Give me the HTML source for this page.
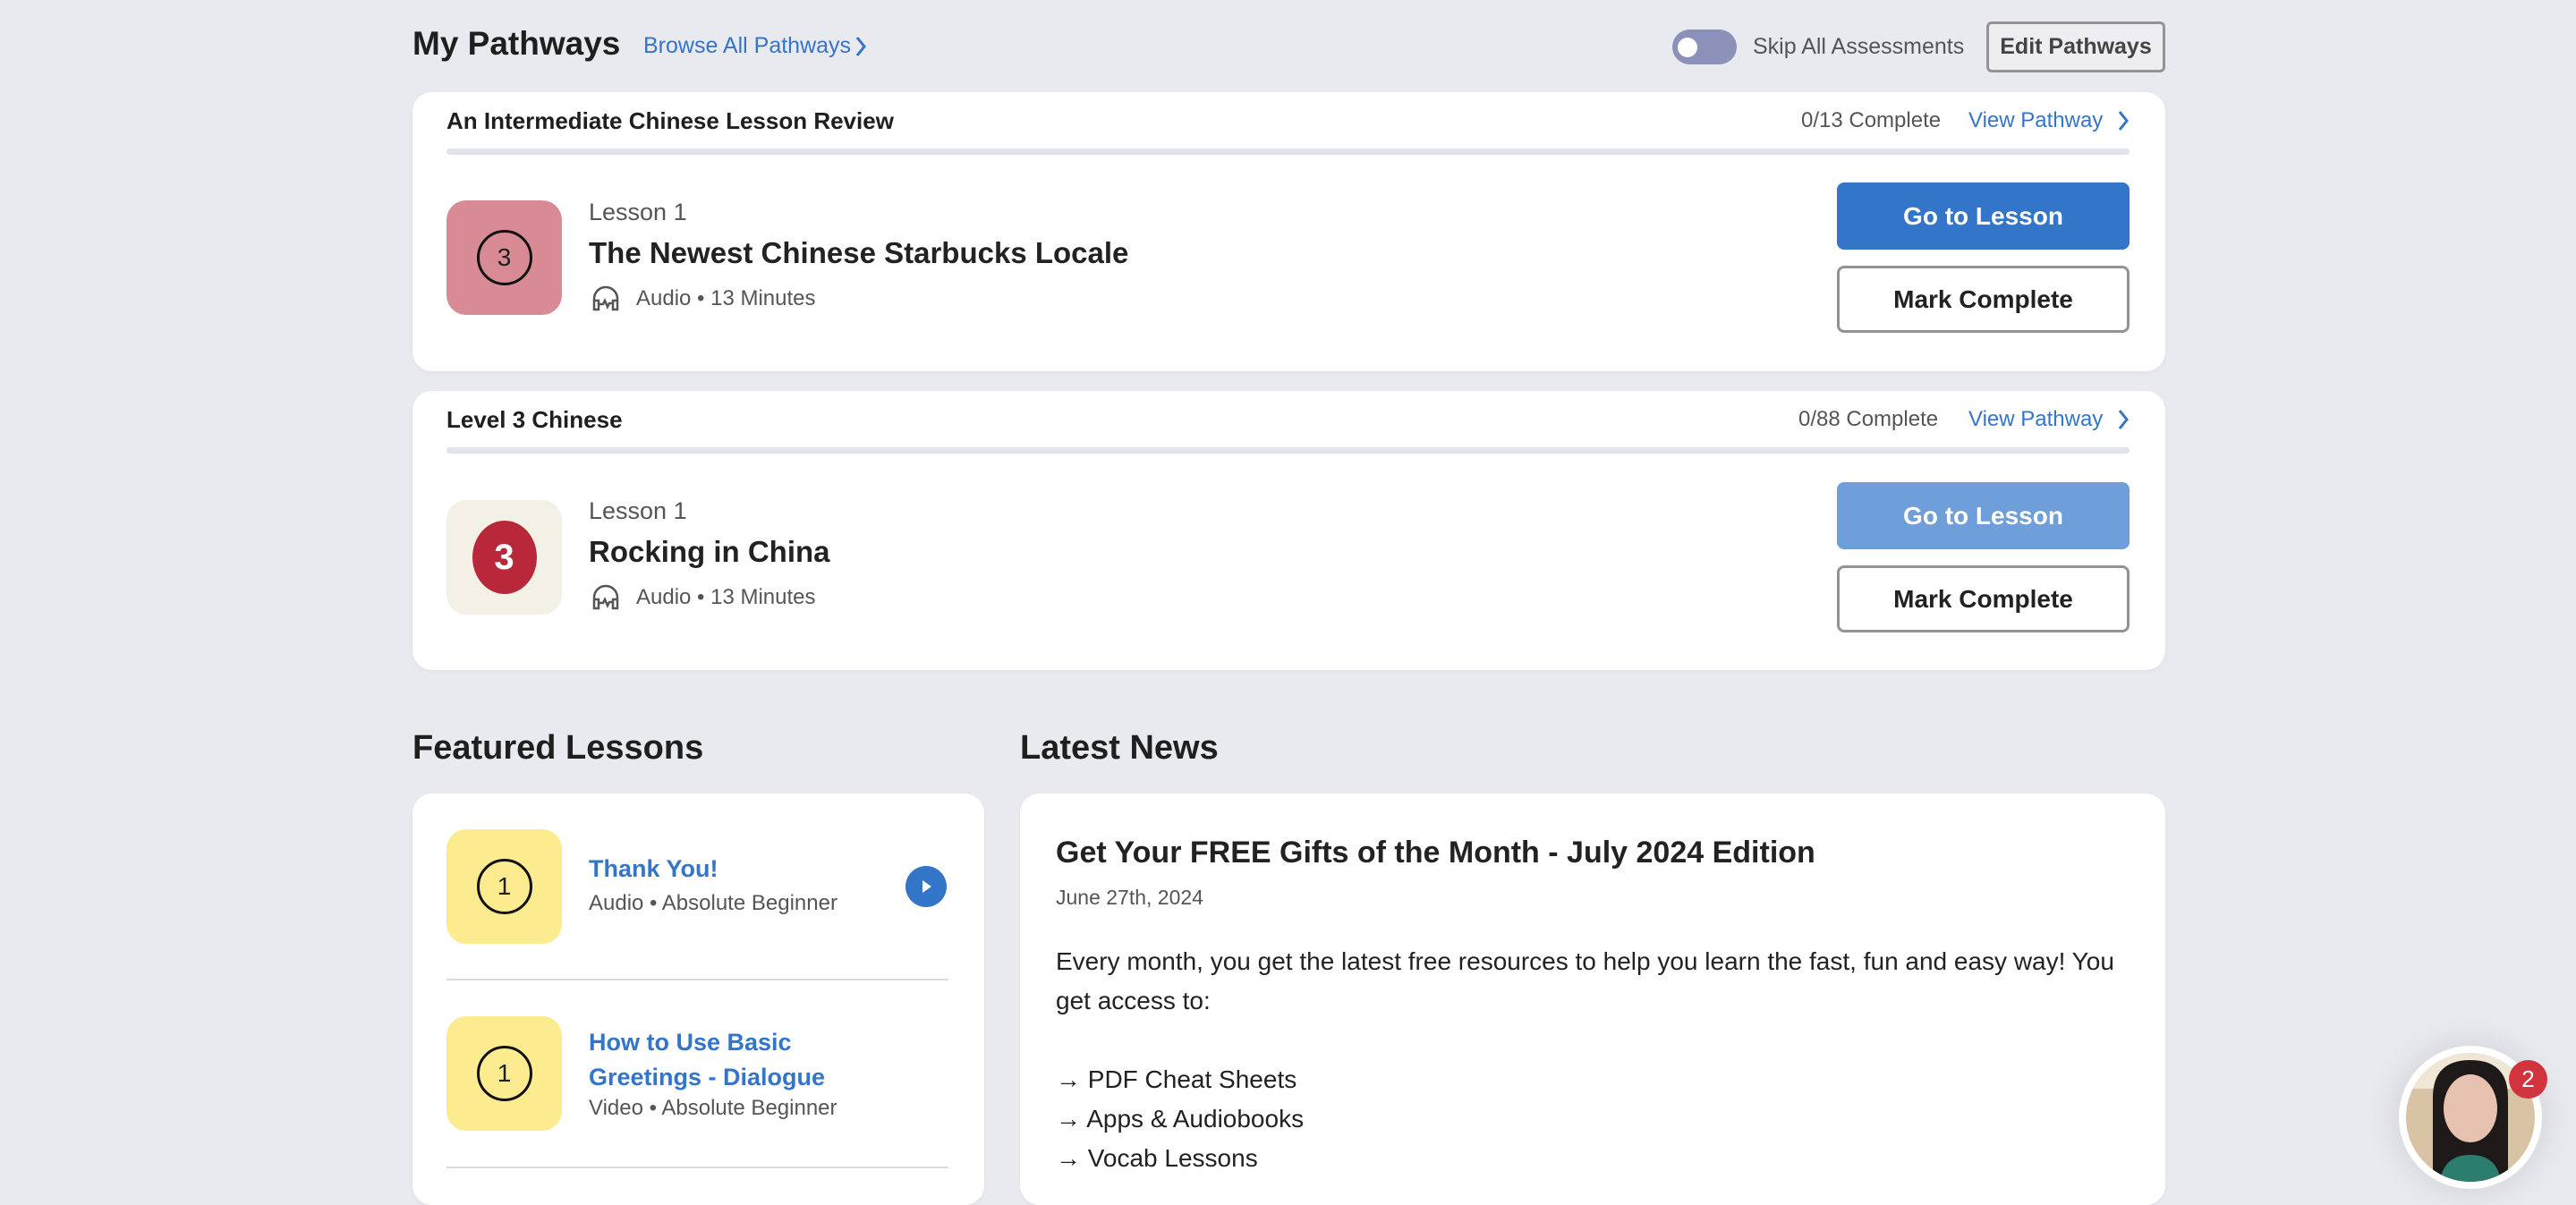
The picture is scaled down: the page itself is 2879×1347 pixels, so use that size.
<!DOCTYPE html>
<html><head><meta charset="utf-8"><style>
*{margin:0;padding:0;box-sizing:border-box}
body{width:2879px;height:1310px;overflow:hidden;background:#e9eaef;font-family:"Liberation Sans",sans-serif;position:relative;color:#1f1f1f}
.a{position:absolute;white-space:nowrap}
.card{position:absolute;background:#fff;border-radius:22px;box-shadow:0 2px 6px rgba(0,0,0,.04)}
.blue{color:#3375c9}
.gray{color:#555}
.btn{position:absolute;border-radius:8px;font-weight:bold;font-size:28px;display:flex;align-items:center;justify-content:center}
.thumb{position:absolute;width:129px;height:128px;border-radius:22px;display:flex;align-items:center;justify-content:center}
.circ{width:62px;height:62px;border:3px solid #111;border-radius:50%;display:flex;align-items:center;justify-content:center;font-size:28px}
.bar{position:absolute;height:7px;background:#e0e3ec;border-radius:4px}
</style></head><body>

<div class="a" style="left:461px;top:28px;font-size:37px;font-weight:bold">My Pathways</div>
<div class="a blue" style="left:719px;top:37px;font-size:25px">Browse All Pathways</div>
<svg class="a" style="left:955px;top:40px" width="14" height="24" viewBox="0 0 14 24"><path d="M3 2l8 10-8 10" stroke="#3375c9" stroke-width="3" fill="none"/></svg>

<div class="a" style="left:1869px;top:33px;width:72px;height:39px;border-radius:20px;background:#8b91b8"></div>
<div class="a" style="left:1875px;top:42px;width:22px;height:22px;border-radius:50%;background:#fff"></div>
<div class="a gray" style="left:1959px;top:38px;font-size:25px">Skip All Assessments</div>
<div class="btn" style="left:2220px;top:24px;width:200px;height:57px;border:3px solid #939393;background:#eeeef2;color:#444;font-size:25px;border-radius:6px">Edit Pathways</div>

<!-- card 1 -->
<div class="card" style="left:461px;top:103px;width:1959px;height:312px"></div>
<div class="a" style="left:499px;top:120px;font-size:26px;font-weight:bold">An Intermediate Chinese Lesson Review</div>
<div class="a gray" style="left:2013px;top:121px;font-size:24px">0/13 Complete</div>
<div class="a blue" style="left:2200px;top:121px;font-size:24px">View Pathway</div>
<svg class="a" style="left:2366px;top:123px" width="14" height="24" viewBox="0 0 14 24"><path d="M3 2l8 10-8 10" stroke="#3375c9" stroke-width="3" fill="none"/></svg>
<div class="bar" style="left:499px;top:166px;width:1881px"></div>
<div class="thumb" style="left:499px;top:224px;background:#d88b94"><div class="circ">3</div></div>
<div class="a" style="left:658px;top:222px;font-size:27px;color:#555">Lesson 1</div>
<div class="a" style="left:658px;top:264px;font-size:33px;font-weight:bold;color:#222">The Newest Chinese Starbucks Locale</div>
<svg class="a" style="left:660px;top:318px" width="34" height="30" viewBox="0 0 34 30"><path d="M4 26V16a13 13 0 0 1 26 0v10M4 18h5v10H4zM25 18h5v10h-5zM10 22h4l2-4 3 7 2-4h3" stroke="#555" stroke-width="2.5" fill="none"/></svg>
<div class="a gray" style="left:711px;top:320px;font-size:24px">Audio • 13 Minutes</div>
<div class="btn" style="left:2053px;top:204px;width:327px;height:75px;background:#3375c9;color:#fff">Go to Lesson</div>
<div class="btn" style="left:2053px;top:297px;width:327px;height:75px;border:3px solid #939393;background:#fff;color:#222">Mark Complete</div>

<!-- card 2 -->
<div class="card" style="left:461px;top:437px;width:1959px;height:312px"></div>
<div class="a" style="left:499px;top:454px;font-size:26px;font-weight:bold">Level 3 Chinese</div>
<div class="a gray" style="left:2010px;top:455px;font-size:24px">0/88 Complete</div>
<div class="a blue" style="left:2200px;top:455px;font-size:24px">View Pathway</div>
<svg class="a" style="left:2366px;top:457px" width="14" height="24" viewBox="0 0 14 24"><path d="M3 2l8 10-8 10" stroke="#3375c9" stroke-width="3" fill="none"/></svg>
<div class="bar" style="left:499px;top:500px;width:1881px"></div>
<div class="thumb" style="left:499px;top:559px;background:#f3f0e6"><div style="width:72px;height:82px;border-radius:50%;background:#b9283a;color:#fff;font-size:40px;font-weight:bold;display:flex;align-items:center;justify-content:center">3</div></div>
<div class="a" style="left:658px;top:556px;font-size:27px;color:#555">Lesson 1</div>
<div class="a" style="left:658px;top:598px;font-size:33px;font-weight:bold;color:#222">Rocking in China</div>
<svg class="a" style="left:660px;top:652px" width="34" height="30" viewBox="0 0 34 30"><path d="M4 26V16a13 13 0 0 1 26 0v10M4 18h5v10H4zM25 18h5v10h-5zM10 22h4l2-4 3 7 2-4h3" stroke="#555" stroke-width="2.5" fill="none"/></svg>
<div class="a gray" style="left:711px;top:654px;font-size:24px">Audio • 13 Minutes</div>
<div class="btn" style="left:2053px;top:539px;width:327px;height:75px;background:#6e9fdb;color:#fff">Go to Lesson</div>
<div class="btn" style="left:2053px;top:632px;width:327px;height:75px;border:3px solid #939393;background:#fff;color:#222">Mark Complete</div>

<!-- Featured -->
<div class="a" style="left:461px;top:815px;font-size:38px;font-weight:bold">Featured Lessons</div>
<div class="card" style="left:461px;top:887px;width:639px;height:460px"></div>
<div class="thumb" style="left:499px;top:927px;background:#fdeb8f"><div class="circ">1</div></div>
<div class="a blue" style="left:658px;top:956px;font-size:27px;font-weight:bold">Thank You!</div>
<div class="a gray" style="left:658px;top:996px;font-size:24px">Audio • Absolute Beginner</div>
<div class="a" style="left:1012px;top:968px;width:46px;height:46px;border-radius:50%;background:#3375c9"></div>
<svg class="a" style="left:1029px;top:982px" width="14" height="18"><path d="M2 2l10 7-10 7z" fill="#fff"/></svg>
<div class="a" style="left:499px;top:1094px;width:561px;height:2px;background:#dcdcdc"></div>
<div class="thumb" style="left:499px;top:1136px;background:#fdeb8f"><div class="circ">1</div></div>
<div class="a blue" style="left:658px;top:1146px;font-size:27px;font-weight:bold;line-height:39px;white-space:normal;width:330px">How to Use Basic Greetings - Dialogue</div>
<div class="a gray" style="left:658px;top:1225px;font-size:24px">Video • Absolute Beginner</div>
<div class="a" style="left:499px;top:1304px;width:561px;height:2px;background:#dcdcdc"></div>

<!-- News -->
<div class="a" style="left:1140px;top:815px;font-size:38px;font-weight:bold">Latest News</div>
<div class="card" style="left:1140px;top:887px;width:1280px;height:460px"></div>
<div class="a" style="left:1180px;top:934px;font-size:34px;font-weight:bold;color:#222">Get Your FREE Gifts of the Month - July 2024 Edition</div>
<div class="a gray" style="left:1180px;top:990px;font-size:23px">June 27th, 2024</div>
<div class="a" style="left:1180px;top:1053px;font-size:28px;line-height:44px;color:#222">Every month, you get the latest free resources to help you learn the fast, fun and easy way! You<br>get access to:<br><br>→ PDF Cheat Sheets<br>→ Apps &amp; Audiobooks<br>→ Vocab Lessons</div>

<!-- avatar -->
<div class="a" style="left:2681px;top:1169px;width:160px;height:160px;border-radius:50%;background:#fff;box-shadow:0 0 40px rgba(0,0,0,.12)"></div>
<svg class="a" style="left:2689px;top:1177px" width="144" height="144" viewBox="0 0 144 144"><defs><clipPath id="c"><circle cx="72" cy="72" r="72"/></clipPath></defs><g clip-path="url(#c)"><rect width="144" height="144" fill="#d8c3a5"/><rect x="0" y="0" width="144" height="40" fill="#efe6d6"/><path d="M30 144V50q0-42 42-42t42 42v94z" fill="#1e1a1a"/><ellipse cx="72" cy="62" rx="30" ry="38" fill="#e8c2b0"/><path d="M38 144q4-30 34-30t34 30z" fill="#2b7d6e"/></g></svg>
<div class="a" style="left:2804px;top:1185px;width:43px;height:43px;border-radius:50%;background:#d1343f;color:#fff;font-size:26px;display:flex;align-items:center;justify-content:center">2</div>
</body></html>
